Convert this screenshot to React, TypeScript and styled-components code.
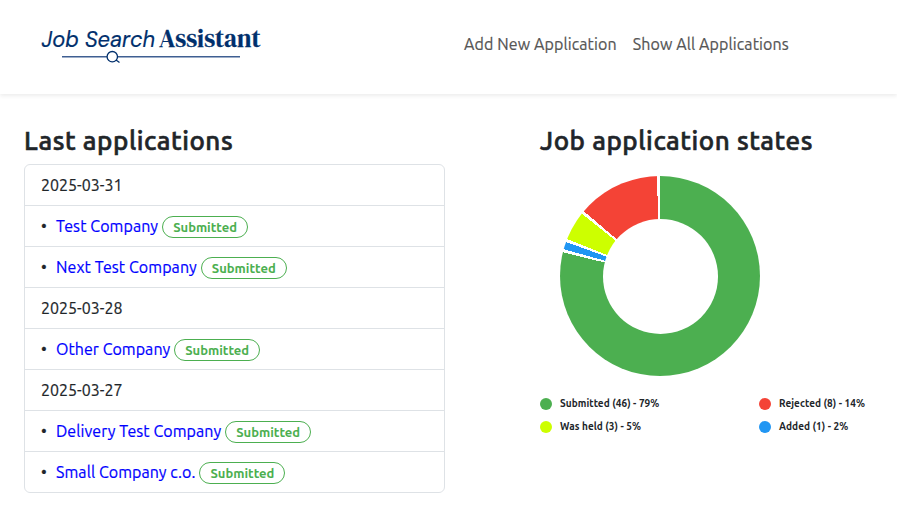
import React from "react";
import styled, { createGlobalStyle } from "styled-components";

const GlobalStyle = createGlobalStyle`
  *, *::before, *::after { box-sizing: border-box; }
  body {
    margin: 0;
    background: #fff;
    color: #212529;
    font: 400 16px/24px Ubuntu, "Noto Sans", sans-serif;
    letter-spacing: 0.11px;
    overflow: hidden;
  }
`;

const Header = styled.header`
  display: flex;
  height: 94px;
  padding: 20px 0 0 40px;
  box-shadow: 0 2px 4px rgba(0, 0, 0, 0.075);
`;

const Logo = styled.svg`
  flex: none;
  width: 224px;
  height: 50px;
`;

const Nav = styled.nav`
  display: flex;
  gap: 16px;
  margin: 12px 0 0 200px;
`;

const NavLink = styled.a`
  color: #555;
  white-space: nowrap;
  -webkit-text-stroke: 0.2px;
`;

const Main = styled.main`
  display: flex;
  gap: 95px;
  padding: 31px 24px 0;
`;

const Applications = styled.section`
  flex: none;
  width: 421px;
`;

const States = styled.section`
  flex: none;
  width: 357px;
`;

const Heading = styled.h2`
  margin: 0 0 8px;
  font-size: 26px;
  font-weight: 500;
  line-height: 31px;
  letter-spacing: 0.56px;
  white-space: nowrap;
  -webkit-text-stroke: 0.6px;
`;

const List = styled.ul`
  margin: 0;
  padding: 0;
  list-style: none;
  border: 1px solid #dee2e6;
  border-radius: 6px;
`;

const Item = styled.li`
  display: flex;
  align-items: center;
  height: 41px;
  padding: 0 16px;
  -webkit-text-stroke: 0.2px;
  & + & { border-top: 1px solid #dee2e6; }
  &:first-child { height: 40px; }
`;

const DateText = styled.span`
  letter-spacing: 0;
`;

const Bullet = styled.span`
  width: 15px;
`;

const Company = styled.a<{ $spacing: number }>`
  color: #00f;
  letter-spacing: ${(p) => p.$spacing}px;
`;

const Badge = styled.span`
  width: 86px;
  height: 22px;
  margin: 2px 0 0 4px;
  border: 1px solid #4caf50;
  border-radius: 11px;
  color: #4caf50;
  font-size: 13px;
  font-weight: 700;
  line-height: 21px;
  letter-spacing: 0;
  text-align: center;
  -webkit-text-stroke: 0;
`;

const Donut = styled.div`
  display: grid;
  place-items: center;
  width: 200px;
  height: 200px;
  margin: 20px 0 0 20px;
  border-radius: 50%;
  background: conic-gradient(
    #4caf50 0 78.81%, #fff 78.81% 79.31%,
    #2196f3 79.31% 80.53%, #fff 80.53% 81.03%,
    #cdff00 81.03% 85.71%, #fff 85.71% 86.21%,
    #f44336 86.21% 99.5%, #fff 99.5%
  );
  &::after {
    content: "";
    width: 115px;
    height: 115px;
    border-radius: 50%;
    background: #fff;
  }
`;

const Legend = styled.div`
  display: grid;
  grid-template-columns: 219px auto;
  row-gap: 8px;
  margin-top: 20px;
`;

const LegendItem = styled.div`
  display: flex;
  align-items: center;
  gap: 8px;
  height: 15px;
  font-size: 10px;
  font-weight: 700;
  line-height: 15px;
  letter-spacing: 0.07px;
  white-space: nowrap;
`;

const Dot = styled.span<{ $color: string }>`
  width: 12px;
  height: 12px;
  margin-top: 1px;
  border-radius: 50%;
  background: ${(p) => p.$color};
`;

type Entry = { date: string } | { company: string; spacing: number };

const entries: Entry[] = [
  { date: "2025-03-31" },
  { company: "Test Company", spacing: 0.08 },
  { company: "Next Test Company", spacing: 0.08 },
  { date: "2025-03-28" },
  { company: "Other Company", spacing: 0.04 },
  { date: "2025-03-27" },
  { company: "Delivery Test Company", spacing: 0.07 },
  { company: "Small Company c.o.", spacing: 0.07 },
];

const legend = [
  { label: "Submitted (46) - 79%", color: "#4caf50" },
  { label: "Rejected (8) - 14%", color: "#f44336" },
  { label: "Was held (3) - 5%", color: "#cdff00" },
  { label: "Added (1) - 2%", color: "#2196f3" },
];

const BrandLogo = () => (
  <Logo viewBox="0 0 224 50" fill="#002f6c" role="img" aria-label="Job Search Assistant">
    <text x="1.500" y="26.500" fontFamily='"DM Sans", Inter, sans-serif' fontStyle="italic" fontSize="23.500" letterSpacing="0" textLength="113.500" lengthAdjust="spacingAndGlyphs" stroke="#002f6c" strokeWidth="0.200">Job Search</text>
    <text x="119" y="26.700" fontFamily='"DM Serif Display", "Liberation Serif", serif' fontSize="25" letterSpacing="0" textLength="101.500" lengthAdjust="spacingAndGlyphs" stroke="#002f6c" strokeWidth="0.300">Assistant</text>
    <path d="M22 36.800H67M77.500 36.800H200" stroke="#3f5f92" strokeWidth="1.600" />
    <circle cx="72.300" cy="36.700" r="5.200" fill="none" stroke="#002f6c" strokeWidth="1.300" />
    <path d="M76 40l3.500 2.500" stroke="#002f6c" strokeWidth="1.300" />
  </Logo>
);

export default function App() {
  return (
    <>
      <GlobalStyle />
      <Header>
        <BrandLogo />
        <Nav>
          <NavLink>Add New Application</NavLink>
          <NavLink>Show All Applications</NavLink>
        </Nav>
      </Header>
      <Main>
        <Applications>
          <Heading>Last applications</Heading>
          <List>
            {entries.map((entry) =>
              "date" in entry ? (
                <Item key={entry.date}><DateText>{entry.date}</DateText></Item>
              ) : (
                <Item key={entry.company}>
                  <Bullet>•</Bullet>
                  <Company $spacing={entry.spacing}>{entry.company}</Company>
                  <Badge>Submitted</Badge>
                </Item>
              )
            )}
          </List>
        </Applications>
        <States>
          <Heading>Job application states</Heading>
          <Donut />
          <Legend>
            {legend.map(({ label, color }) => (
              <LegendItem key={label}><Dot $color={color} />{label}</LegendItem>
            ))}
          </Legend>
        </States>
      </Main>
    </>
  );
}
